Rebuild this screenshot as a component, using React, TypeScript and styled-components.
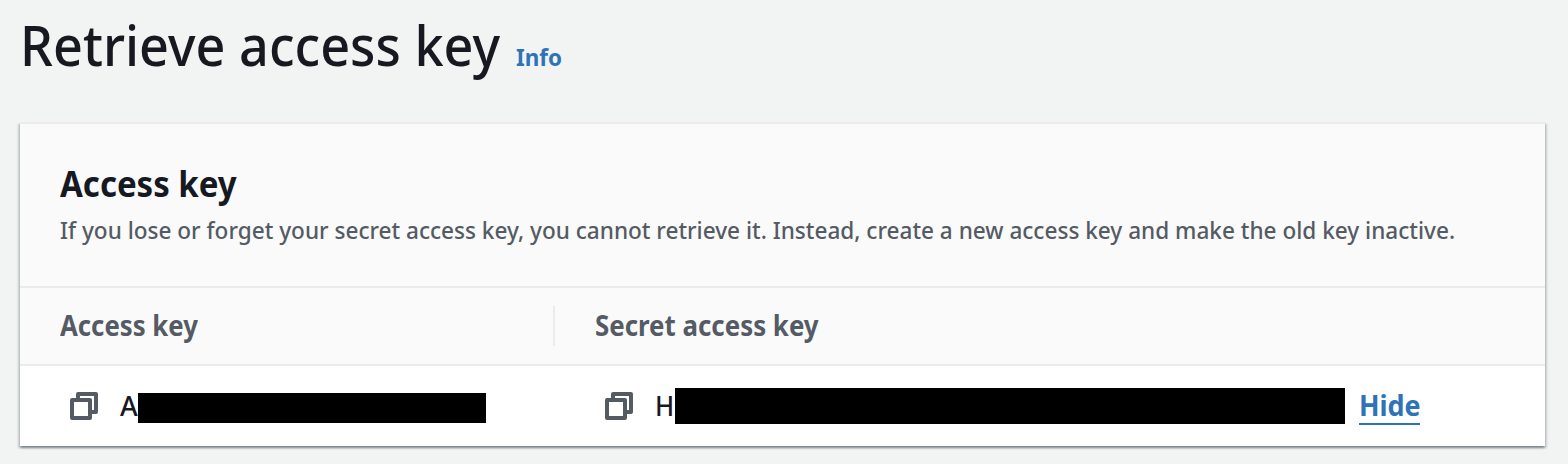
import React from 'react';
import styled, { createGlobalStyle } from 'styled-components';

const Global = createGlobalStyle`
  * { box-sizing: border-box; }
  body { margin: 0; background: #f2f3f3; font-family: "Noto Sans", "Open Sans", sans-serif; color: #16191f; }
`;

const Narrow = styled.span<{ $scale: number }>`
  display: inline-block;
  white-space: nowrap;
  transform: scaleX(${p => p.$scale});
  transform-origin: left;
`;

const Page = styled.main`
  height: 464px;
  padding: 0 23px 0 20px;
  overflow: hidden;
`;

const Heading = styled.header`
  height: 122px;
  display: flex;
  align-items: baseline;
  padding: 6px 0 0 0;
`;

const Title = styled.h1`
  margin: 0;
  width: 496px;
  font-size: 56px;
  line-height: 76px;
  font-weight: 500;
`;

const Info = styled.a`
  font-size: 24px;
  font-weight: 700;
  color: #2e73b8;
`;

const Card = styled.section`
  height: 324px;
  border-top: 2px solid #ebebeb;
  background: #fff;
  box-shadow: 0 2px 2px rgba(0, 28, 36, 0.3), 2px 2px 2px rgba(0, 28, 36, 0.15), -2px 2px 2px rgba(0, 28, 36, 0.15);
`;

const CardHead = styled.div`
  height: 164px;
  padding: 35px 40px 0;
  background: #fafafa;
  border-bottom: 2px solid #ebebeb;
`;

const CardTitle = styled.h2`
  margin: 0;
  font-size: 36px;
  line-height: 50px;
  font-weight: 700;
`;

const Desc = styled.p`
  margin: 4px 0 0;
  width: 1400px;
  font-size: 24px;
  line-height: 34px;
  font-weight: 500;
  color: #545b64;
`;

const Columns = styled.div`
  display: grid;
  grid-template-columns: 533px 1fr;
  align-items: center;
  height: 78px;
  background: #fafafa;
  border-bottom: 2px solid #ebebeb;
`;

const Column = styled.div`
  height: 40px;
  padding-left: 40px;
  line-height: 38px;
  font-size: 28px;
  font-weight: 700;
  color: #545b64;
  & + & { border-left: 2px solid #ebebeb; }
`;

const Row = styled.div`
  display: grid;
  grid-template-columns: 535px 1fr;
  height: 80px;
`;

const Cell = styled.div`
  display: flex;
  align-items: center;
  padding-left: 50px;
`;

const Icon = styled.svg`
  flex: none;
  width: 28px;
  height: 28px;
  margin-right: 22px;
`;

const Value = styled.span<{ $w: number }>`
  width: ${p => p.$w}px;
  font-size: 27px;
  line-height: 40px;
  font-weight: 500;
`;

const Redaction = styled.span<{ $w: number; $h: number; $drop?: number }>`
  width: ${p => p.$w}px;
  height: ${p => p.$h}px;
  margin-top: ${p => p.$drop || 0}px;
  background: #000;
`;

const Hide = styled.a`
  width: 61px;
  height: 34px;
  margin: 4px 0 0 14px;
  border-bottom: 2px solid #2e73b8;
  font-size: 28px;
  line-height: 28px;
  font-weight: 700;
  color: #2e73b8;
`;

const CopyIcon = () => (
  <Icon viewBox="0 0 28 28" fill="none" stroke="#545b64" strokeWidth="4" strokeLinejoin="round">
    <path d="M8 7V2H26V20H21" />
    <path d="M2 8H20V26H2Z" />
  </Icon>
);

export default function App() {
  return (
    <>
      <Global />
      <Page>
        <Heading>
          <Title><Narrow $scale={0.932}>Retrieve access key</Narrow></Title>
          <Info><Narrow $scale={0.935}>Info</Narrow></Info>
        </Heading>
        <Card>
          <CardHead>
            <CardTitle><Narrow $scale={0.917}>Access key</Narrow></CardTitle>
            <Desc>
              <Narrow $scale={0.9405}>
                If you lose or forget your secret access key, you cannot retrieve it. Instead, create a new access key and make the old key inactive.
              </Narrow>
            </Desc>
          </CardHead>
          <Columns>
            <Column><Narrow $scale={0.92}>Access key</Narrow></Column>
            <Column><Narrow $scale={0.924}>Secret access key</Narrow></Column>
          </Columns>
          <Row>
            <Cell>
              <CopyIcon />
              <Value $w={18}>A</Value>
              <Redaction $w={348} $h={30} $drop={4} />
            </Cell>
            <Cell>
              <CopyIcon />
              <Value $w={20}><Narrow $scale={0.95}>H</Narrow></Value>
              <Redaction $w={670} $h={36} />
              <Hide><Narrow $scale={0.96}>Hide</Narrow></Hide>
            </Cell>
          </Row>
        </Card>
      </Page>
    </>
  );
}
